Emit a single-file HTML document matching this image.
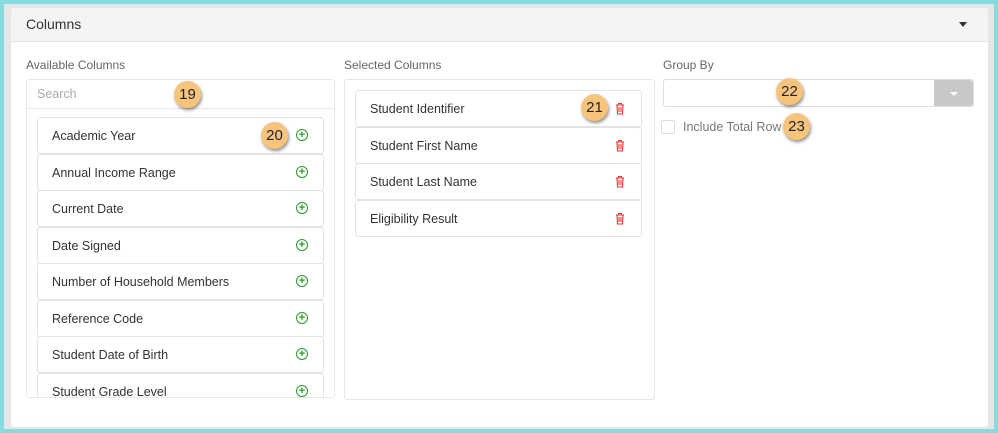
<!DOCTYPE html>
<html><head><style>
*{box-sizing:border-box;margin:0;padding:0}
body{width:998px;height:433px;background:#86dbdd;font-family:"Liberation Sans",sans-serif;position:relative;overflow:hidden}
.wrap{position:absolute;left:4px;top:4px;width:990px;height:425px;background:#e6e6e6}
.card{position:absolute;left:11px;top:8px;width:977px;height:419px;background:#fff;border-radius:3px}
.hdr{position:absolute;left:0;top:0;width:100%;height:34px;background:#f4f4f4;border-bottom:1px solid #e4e4e4;border-radius:3px 3px 0 0}
.hdr span{position:absolute;left:15px;top:8px;font-size:14px;color:#333}
.caret{position:absolute;left:948px;top:14px;width:0;height:0;border-left:4px solid transparent;border-right:4px solid transparent;border-top:5px solid #333}
.lbl{position:absolute;font-size:12px;color:#666}
.panel{position:absolute;border:1px solid #e8e8e8;border-radius:3px;background:#fff;overflow:hidden}
.item{position:absolute;left:10px;width:287px;height:37px;border:1px solid #e3e3e3;border-radius:3px;background:#fff;font-size:12.5px;color:#333;padding:11px 14px}
.plus{position:absolute;right:15px;top:11px;width:12px;height:12px;border:1px solid #2a9a2a;border-radius:50%;color:#2a9a2a;font-size:11px;line-height:10px;text-align:center;font-weight:bold}
.trash{position:absolute;right:16px;top:11px}
.badge{position:absolute;width:27px;height:27px;border-radius:50%;background:#f8c47c;box-shadow:1px 2px 3px rgba(0,0,0,.45);font-size:15px;color:#1b2233;text-align:center;line-height:27px}
</style></head><body>
<div class="wrap"></div>
<div class="card">
<div class="hdr"><span>Columns</span><div class="caret"></div></div>
</div>
<div class="lbl" style="left:26px;top:58px">Available Columns</div>
<div class="lbl" style="left:344px;top:58px">Selected Columns</div>
<div class="lbl" style="left:663px;top:58px">Group By</div>
<div class="panel" style="left:26px;top:79px;width:309px;height:319px">
 <div style="position:absolute;left:0;top:0;width:100%;height:29px;border-bottom:1px solid #e8e8e8;font-size:12.5px;color:#aaa;padding:7px 10px">Search</div>
 <div class="item" style="top:37px">Academic Year<div class="plus">+</div></div>
 <div class="item" style="top:73.5px">Annual Income Range<div class="plus">+</div></div>
 <div class="item" style="top:110px">Current Date<div class="plus">+</div></div>
 <div class="item" style="top:146.5px">Date Signed<div class="plus">+</div></div>
 <div class="item" style="top:183px">Number of Household Members<div class="plus">+</div></div>
 <div class="item" style="top:219.5px">Reference Code<div class="plus">+</div></div>
 <div class="item" style="top:256px">Student Date of Birth<div class="plus">+</div></div>
 <div class="item" style="top:292.5px">Student Grade Level<div class="plus">+</div></div>
</div>
<div class="panel" style="left:344px;top:79px;width:311px;height:321px">
 <div class="item" style="top:10px">Student Identifier<svg class="trash" width="10" height="13" viewBox="0 0 10 13"><path d="M1 3h8M3.5 3V1.5h3V3M2 3l.5 9h5L8 3M4 5v5M6 5v5" fill="none" stroke="#e33" stroke-width="1.1"/></svg></div>
 <div class="item" style="top:46.5px">Student First Name<svg class="trash" width="10" height="13" viewBox="0 0 10 13"><path d="M1 3h8M3.5 3V1.5h3V3M2 3l.5 9h5L8 3M4 5v5M6 5v5" fill="none" stroke="#e33" stroke-width="1.1"/></svg></div>
 <div class="item" style="top:83px">Student Last Name<svg class="trash" width="10" height="13" viewBox="0 0 10 13"><path d="M1 3h8M3.5 3V1.5h3V3M2 3l.5 9h5L8 3M4 5v5M6 5v5" fill="none" stroke="#e33" stroke-width="1.1"/></svg></div>
 <div class="item" style="top:119.5px">Eligibility Result<svg class="trash" width="10" height="13" viewBox="0 0 10 13"><path d="M1 3h8M3.5 3V1.5h3V3M2 3l.5 9h5L8 3M4 5v5M6 5v5" fill="none" stroke="#e33" stroke-width="1.1"/></svg></div>
</div>
<div style="position:absolute;left:663px;top:79px;width:311px;height:28px;border:1px solid #ddd;border-radius:3px;background:#fff"></div>
<div style="position:absolute;left:934px;top:80px;width:39px;height:26px;background:#c8c8c8;border-radius:0 3px 3px 0"></div>
<div style="position:absolute;left:950px;top:92px;border-left:4px solid transparent;border-right:4px solid transparent;border-top:4px solid #fff"></div>
<div style="position:absolute;left:661px;top:120px;width:14px;height:14px;border:1px solid #ddd;border-radius:2px"></div>
<div class="lbl" style="left:683px;top:120px;font-size:12.5px;color:#777">Include Total Row</div>
<div class="badge" style="left:174px;top:81px">19</div>
<div class="badge" style="left:261px;top:122px">20</div>
<div class="badge" style="left:581px;top:94px">21</div>
<div class="badge" style="left:776px;top:78px">22</div>
<div class="badge" style="left:783px;top:113px">23</div>
</body></html>
